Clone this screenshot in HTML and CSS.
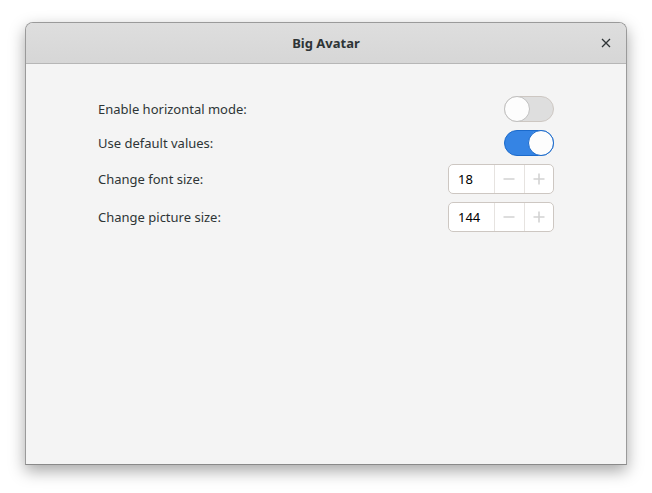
FILE: index.html
```html
<!DOCTYPE html>
<html>
<head>
<meta charset="utf-8">
<link rel="stylesheet" href="styles.css">
</head>
<body>
<div class="window">
  <div class="headerbar">
    <div class="title">Big Avatar</div>
    <button class="close" aria-label="Close">
      <svg width="16" height="16" viewBox="0 0 16 16"><path d="M4 4 L12 12 M12 4 L4 12" stroke="#2e3436" stroke-width="1.3" fill="none"/></svg>
    </button>
  </div>
  <div class="content">
    <div class="row">
      <span class="label">Enable horizontal mode:</span>
      <div class="switch"><div class="knob"></div></div>
    </div>
    <div class="row">
      <span class="label">Use default values:</span>
      <div class="switch on"><div class="knob"></div></div>
    </div>
    <div class="row tall">
      <span class="label">Change font size:</span>
      <div class="spin"><span class="value">18</span>
        <span class="btn"><svg width="12" height="12" viewBox="0 0 12 12"><path d="M0.5 6 H11.5" stroke="#d2d2d2" stroke-width="1.6"/></svg></span>
        <span class="btn"><svg width="12" height="12" viewBox="0 0 12 12"><path d="M0.5 6 H11.5 M6 0.5 V11.5" stroke="#d2d2d2" stroke-width="1.6"/></svg></span>
      </div>
    </div>
    <div class="row tall">
      <span class="label">Change picture size:</span>
      <div class="spin"><span class="value">144</span>
        <span class="btn"><svg width="12" height="12" viewBox="0 0 12 12"><path d="M0.5 6 H11.5" stroke="#d2d2d2" stroke-width="1.6"/></svg></span>
        <span class="btn"><svg width="12" height="12" viewBox="0 0 12 12"><path d="M0.5 6 H11.5 M6 0.5 V11.5" stroke="#d2d2d2" stroke-width="1.6"/></svg></span>
      </div>
    </div>
  </div>
</div>
</body>
</html>
```
FILE: styles.css
```css
html, body {
  margin: 0;
  padding: 0;
  background: #ffffff;
}
body {
  font-family: "Noto Sans", "Open Sans", sans-serif;
  font-size: 13px;
  color: #2e3436;
  padding: 22px 0 30px 25px;
}
.window {
  width: 600px;
  height: 441px;
  border: 1px solid #9a9a9a;
  border-bottom-color: #8a8a8a;
  border-radius: 8px 8px 0 0;
  background: #f4f4f4;
  box-shadow: 0 6px 16px rgba(0,0,0,0.35);
  overflow: hidden;
  display: flex;
  flex-direction: column;
}
.headerbar {
  height: 40px;
  background: linear-gradient(#dedede, #d6d6d6);
  border-bottom: 1px solid #b6b6b6;
  display: flex;
  align-items: center;
  justify-content: center;
  position: relative;
  flex-shrink: 0;
}
.title {
  font-weight: bold;
  font-size: 13px;
  color: #2e3436;
}
.close {
  position: absolute;
  right: 12px;
  top: 12px;
  width: 16px;
  height: 16px;
  padding: 0;
  border: none;
  background: none;
  display: flex;
}
.content {
  padding: 32px 72px 0 72px;
  display: flex;
  flex-direction: column;
  gap: 8px;
}
.row {
  display: flex;
  align-items: center;
  justify-content: space-between;
  height: 26px;
}
.row.tall {
  height: 30px;
}
.label {
  color: #2e3436;
}
.switch {
  width: 48px;
  height: 24px;
  border: 1px solid #cdc7c2;
  border-radius: 14px;
  background: #dedede;
  position: relative;
}
.switch .knob {
  position: absolute;
  left: -1px;
  top: -1px;
  width: 24px;
  height: 24px;
  border-radius: 50%;
  background: #fdfdfd;
  border: 1px solid #bfbfbf;
}
.switch.on {
  background: #3584e4;
  border-color: #1b6acb;
}
.switch.on .knob {
  left: auto;
  right: -1px;
  border-color: #1b6acb;
}
.spin {
  width: 104px;
  height: 28px;
  border: 1px solid #cdc7c2;
  border-radius: 5px;
  background: #ffffff;
  display: flex;
  align-items: stretch;
}
.spin .value {
  width: 46px;
  padding-left: 9px;
  box-sizing: border-box;
  display: flex;
  align-items: center;
  color: #000;
}
.spin .btn {
  width: 29px;
  border-left: 1px solid #e6e3e0;
  display: flex;
  align-items: center;
  justify-content: center;
}
```
